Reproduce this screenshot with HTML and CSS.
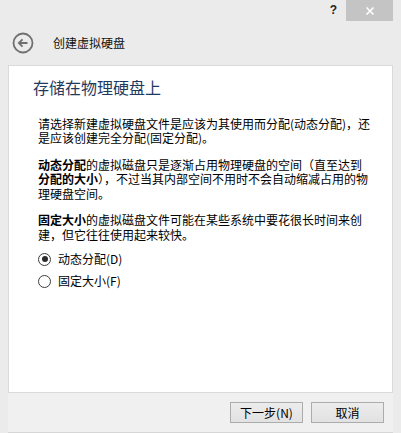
FILE: index.html
```html
<!DOCTYPE html>
<html lang="zh">
<head>
<meta charset="utf-8">
<title>创建虚拟硬盘</title>
<link rel="stylesheet" href="styles.css">
</head>
<body>
<div class="window">
  <div class="titlebar">
    <span class="help">?</span>
    <span class="close">
      <svg width="10" height="10" viewBox="0 0 10 10"><path d="M1.5 1.5 L8.5 8.5 M8.5 1.5 L1.5 8.5" stroke="#fff" stroke-width="1.6"/></svg>
    </span>
  </div>
  <div class="header">
    <svg class="back" width="22" height="22" viewBox="0 0 22 22">
      <circle cx="11" cy="11" r="9.5" fill="none" stroke="#6f6f6f" stroke-width="1.8"/>
      <path d="M15.5 11 H7 M10.5 7.3 L6.8 11 L10.5 14.7" fill="none" stroke="#6f6f6f" stroke-width="1.8"/>
    </svg>
    <span class="title">创建虚拟硬盘</span>
  </div>
  <div class="panel">
    <h1 class="heading">存储在物理硬盘上</h1>
    <div class="content">
      <p class="para">请选择新建虚拟硬盘文件是应该为其使用而分配(动态分配)，还<br>是应该创建完全分配(固定分配)。</p>
      <p class="para"><b class="strong">动态分配</b>的虚拟磁盘只是逐渐占用物理硬盘的空间（直至达到<br><b class="strong">分配的大小</b>），不过当其内部空间不用时不会自动缩减占用的物<br>理硬盘空间。</p>
      <p class="para"><b class="strong">固定大小</b>的虚拟磁盘文件可能在某些系统中要花很长时间来创<br>建，但它往往使用起来较快。</p>
      <div class="radios">
        <div class="radio-row"><span class="radio checked"></span><span class="label">动态分配(D)</span></div>
        <div class="radio-row"><span class="radio"></span><span class="label">固定大小(F)</span></div>
      </div>
    </div>
  </div>
  <div class="footer">
    <button class="btn">下一步(N)</button>
    <button class="btn">取消</button>
  </div>
</div>
</body>
</html>
```
FILE: styles.css
```css
html, body {
  margin: 0;
  padding: 0;
}
body {
  width: 401px;
  height: 433px;
  overflow: hidden;
  background: #e9e9e9;
  font-family: "Noto Sans CJK SC", "Noto Sans", sans-serif;
  color: #000;
}
.window {
  display: flex;
  flex-direction: column;
  height: 433px;
  background: #ebebeb;
}
.titlebar {
  height: 21px;
  display: flex;
  justify-content: flex-end;
  align-items: flex-start;
  padding-right: 8px;
}
.help {
  font-family: "Liberation Sans", sans-serif;
  font-weight: bold;
  font-size: 12px;
  line-height: 21px;
  color: #222;
  margin-right: 9px;
}
.close {
  width: 47px;
  height: 21px;
  background: #c4c4c4;
  display: flex;
  align-items: center;
  justify-content: center;
}
.header {
  height: 44px;
  display: flex;
  align-items: center;
  padding-left: 12px;
}
.back {
  display: block;
}
.title {
  font-size: 12px;
  margin-left: 19px;
  color: #111;
  line-height: 16px;
}
.panel {
  height: 317px;
  margin: 0 8px;
  background: #fff;
  border: 1px solid #dadada;
  padding: 11px 0 0 24px;
  box-sizing: content-box;
}
.heading {
  margin: 0;
  font-size: 16px;
  font-weight: normal;
  line-height: 20px;
  color: #1f3a5f;
}
.content {
  padding-left: 5px;
  margin-top: 20px;
}
.para {
  margin: 0 0 12px 0;
  font-size: 12px;
  line-height: 14.5px;
  white-space: nowrap;
}
.strong {
  font-weight: bold;
  display: inline-block;
  line-height: 14.5px;
}
.radios {
  margin-top: -6px;
  display: flex;
  flex-direction: column;
}
.radio-row {
  height: 22px;
  display: flex;
  align-items: center;
}
.radio {
  width: 11px;
  height: 11px;
  border: 1px solid #3c3c3c;
  border-radius: 50%;
  background: #fff;
  box-sizing: content-box;
  position: relative;
}
.radio.checked::after {
  content: "";
  position: absolute;
  left: 2.5px;
  top: 2.5px;
  width: 6px;
  height: 6px;
  border-radius: 50%;
  background: #2a2a2a;
}
.label {
  font-size: 12px;
  margin-left: 7px;
  line-height: 14px;
}
.footer {
  height: 40px;
  margin: 0 8px;
  background: #f0f0f0;
  display: flex;
  justify-content: flex-end;
  align-items: flex-start;
  padding-top: 9px;
  padding-right: 9px;
  gap: 8px;
  box-sizing: border-box;
  border-bottom: 1px solid #d6d6d6;
}
.btn {
  width: 73px;
  height: 21px;
  border: 1px solid #acacac;
  background: linear-gradient(#ececec, #e2e2e2);
  font-family: "Noto Sans CJK SC", sans-serif;
  font-size: 12px;
  color: #000;
  padding: 0;
  line-height: 18px;
}
```
